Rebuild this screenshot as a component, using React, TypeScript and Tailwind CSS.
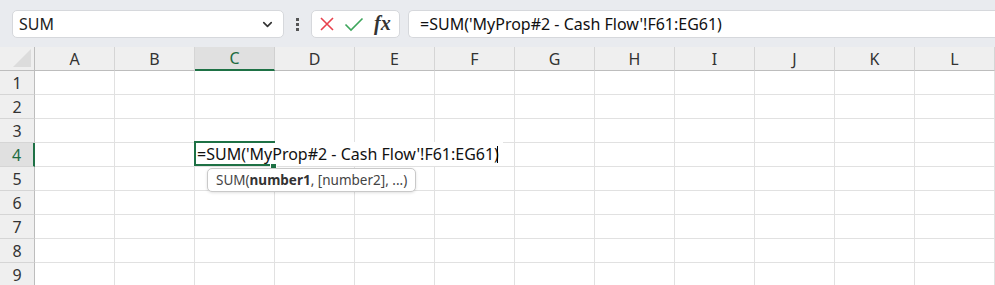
import { ChevronDown } from "lucide-react";

const COLS = ["A", "B", "C", "D", "E", "F", "G", "H", "I", "J", "K", "L"];
const ROWS = [1, 2, 3, 4, 5, 6, 7, 8, 9];
const FORMULA = "=SUM('MyProp#2 - Cash Flow'!F61:EG61)";

function Toolbar() {
  return (
    <div className="h-[47px] bg-[#e9ebef] flex items-start pt-[10px] pl-[12px] gap-0">
      {/* name box */}
      <div className="w-[272px] h-[28px] bg-white rounded-[5px] border border-[#d6d8dc] flex items-center pl-[6px] pr-[8px]">
        <span className="flex-1 text-[16px] text-[#222]">SUM</span>
        <ChevronDown size={15} strokeWidth={2.6} className="text-[#333]" />
      </div>
      {/* more dots */}
      <div className="w-[27px] h-[28px] flex flex-col items-center justify-center gap-[2px]">
        <span className="w-[3px] h-[3px] bg-[#555]" />
        <span className="w-[3px] h-[3px] bg-[#555]" />
        <span className="w-[3px] h-[3px] bg-[#555]" />
      </div>
      {/* cancel / enter / fx */}
      <div className="w-[89px] h-[28px] bg-white rounded-[5px] border border-[#d6d8dc] flex items-center pl-[7px] gap-[9px]">
        <svg width="16" height="16" viewBox="0 0 16 16">
          <path d="M2 2 L14 14 M14 2 L2 14" stroke="#e8414d" strokeWidth="1.6" fill="none" />
        </svg>
        <svg width="20" height="16" viewBox="0 0 20 16">
          <path d="M1.5 8.5 L7 14 L18.5 2.5" stroke="#3ea65c" strokeWidth="1.6" fill="none" />
        </svg>
        <span className="font-['Liberation_Serif',serif] italic font-semibold text-[20px] leading-none text-[#333] ml-[1px] -mt-[2px]">
          fx
        </span>
      </div>
      {/* formula box */}
      <div className="ml-[8px] flex-1 h-[28px] bg-white rounded-l-[5px] border border-r-0 border-[#d6d8dc] flex items-center pl-[11px]">
        <span className="text-[16px] text-[#111] whitespace-nowrap">{FORMULA}</span>
      </div>
    </div>
  );
}

function Grid() {
  return (
    <div className="relative grid grid-cols-[35px_repeat(12,80px)] grid-rows-[24px_repeat(9,24px)]">
      {/* corner */}
      <div className="bg-[#efefef] border-r border-b border-[#bdbdbd] relative overflow-hidden">
        <svg className="absolute right-[3px] bottom-[3px]" width="18" height="18" viewBox="0 0 18 18">
          <path d="M18 0 L18 18 L0 18 Z" fill="#dcdcdc" />
        </svg>
      </div>
      {COLS.map((c) => (
        <div
          key={c}
          className={
            c === "C"
              ? "bg-[#e0e0e0] border-r border-[#d0d0d0] border-b-2 border-b-[#1e7145] flex items-center justify-center text-[16px] text-[#1d6b40]"
              : "bg-[#efefef] border-r border-[#d5d5d5] border-b border-b-[#bdbdbd] flex items-center justify-center text-[16px] text-[#333]"
          }
        >
          {c}
        </div>
      ))}
      {ROWS.map((r) => (
        <div key={r} className="contents">
          <div
            className={
              r === 4
                ? "bg-[#e0e0e0] border-r-2 border-r-[#1e7145] border-b border-[#d5d5d5] flex items-center justify-center text-[16px] text-[#1d6b40]"
                : "bg-[#efefef] border-r border-r-[#bdbdbd] border-b border-[#d5d5d5] flex items-center justify-center text-[16px] text-[#333]"
            }
          >
            {r}
          </div>
          {COLS.map((c) => (
            <div key={c} className="border-r border-b border-[#e1e1e1] bg-white" />
          ))}
        </div>
      ))}

      {/* cell editor on C4 */}
      <div className="absolute left-[195px] top-[95px] w-[308px] h-[24px] bg-white flex items-center pl-[2px]">
        <span className="text-[16px] text-[#111] whitespace-nowrap">{FORMULA}</span>
        <span className="w-px h-[17px] bg-black -ml-[2px]" />
      </div>
      <div className="absolute left-[194px] top-[94px] w-[81px] h-[25px] border-l-2 border-t-2 border-b-2 border-[#1e7145]" />
      <div className="absolute left-[270px] top-[116px] w-[7px] h-[6px] bg-[#1e7145] border border-white" />

      {/* function tooltip */}
      <div className="absolute left-[207px] top-[121px] h-[24px] px-[8px] bg-white border border-[#c9c9c9] rounded-[5px] shadow-[0_1px_3px_rgba(0,0,0,0.12)] flex items-center text-[13.5px] text-[#444] whitespace-nowrap">
        SUM(<span className="font-bold text-[#333]">number1</span>, [number2], ...)
      </div>
    </div>
  );
}

export default function App() {
  return (
    <div className="w-[995px] h-[285px] overflow-hidden bg-white font-['Segoe_UI','Noto_Sans',sans-serif]">
      <Toolbar />
      <Grid />
    </div>
  );
}
